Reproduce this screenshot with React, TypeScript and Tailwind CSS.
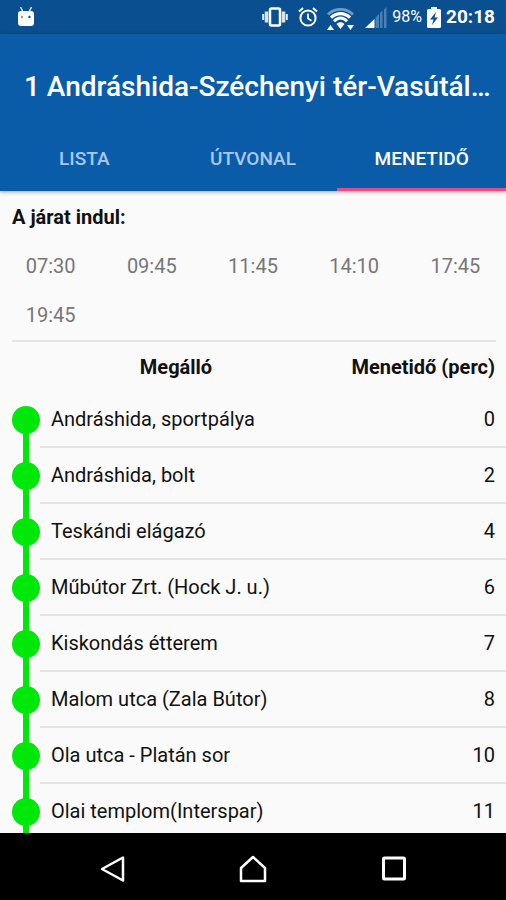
const departures = ["07:30", "09:45", "11:45", "14:10", "17:45", "19:45"];

const stops = [
  { name: "Andráshida, sportpálya", minutes: 0 },
  { name: "Andráshida, bolt", minutes: 2 },
  { name: "Teskándi elágazó", minutes: 4 },
  { name: "Műbútor Zrt. (Hock J. u.)", minutes: 6 },
  { name: "Kiskondás étterem", minutes: 7 },
  { name: "Malom utca (Zala Bútor)", minutes: 8 },
  { name: "Ola utca - Platán sor", minutes: 10 },
  { name: "Olai templom(Interspar)", minutes: 11 },
];

const tabs = [
  { label: "LISTA", active: false },
  { label: "ÚTVONAL", active: false },
  { label: "MENETIDŐ", active: true },
];

function StatusBar() {
  return (
    <div className="flex h-[34px] shrink-0 items-center bg-[#0a4f8f] pr-[11px] pl-[17px] text-white">
      <svg width="18" height="20" viewBox="0 0 18 20" fill="#fff" aria-hidden="true">
        <path d="M3.500 0l2.500 5M14.500 0l-2.500 5" stroke="#dbe7f3" strokeWidth="1.500" />
        <rect x="1" y="4" width="16" height="15" rx="3" />
        <circle cx="5" cy="10" r="1.200" fill="#8a9bb0" />
        <circle cx="12.500" cy="10" r="1.200" fill="#0a4f8f" />
      </svg>
      <div className="ml-auto flex items-center">
        <svg width="26" height="20" viewBox="0 0 26 20" fill="none" aria-hidden="true">
          <path d="M1.200 7v6M24.800 7v6" stroke="#e3edf8" strokeWidth="2" />
          <path d="M4.500 4.500v11M21.500 4.500v11" stroke="#d5e3f2" strokeWidth="3.500" />
          <rect x="8" y="1.500" width="10" height="17" rx="1.500" stroke="#fff" strokeWidth="2.500" />
        </svg>
        <svg className="ml-[10px]" width="20" height="20" viewBox="0 0 20 20" fill="none" stroke="#fff" aria-hidden="true">
          <circle cx="10" cy="11" r="7.600" strokeWidth="2" />
          <path d="M1 4.500L5 1M19 4.500L15 1" strokeWidth="2" />
          <path d="M10 6.500V11.500l3.500 2.200" strokeWidth="1.700" />
        </svg>
        <svg className="mt-1 ml-[9px]" width="27" height="23" viewBox="0 0 27 23" fill="none" aria-hidden="true">
          <path d="M1 6.500C8-.3 19-.3 26 6.500" stroke="#6f9ac6" strokeWidth="2.800" />
          <path d="M4 9.700C9.500 4.300 17.500 4.300 23 9.700" stroke="#fff" strokeWidth="3.200" />
          <path d="M7 13.200C11 9 16 9 20 13.200" stroke="#fff" strokeWidth="3" />
          <path d="M9.500 16C12 13.500 15 13.500 17.500 16L13.500 21z" fill="#fff" />
          <path d="M0 22l3.500-5L7 22zM20 17h7l-3.500 5z" fill="#fff" />
        </svg>
        <svg className="ml-[11px]" width="22" height="21" viewBox="0 0 22 21" aria-hidden="true">
          <path d="M0 21L9.500 12v9z" fill="#fff" />
          <path d="M10.500 10.500l3.500-3.500v14h-3.500zM15 6l2.500-2.500V21H15zM19 2.500L21.500 0v21H19z" fill="#4b80b5" />
        </svg>
        <span className="ml-[5px] text-[16px] leading-5">98%</span>
        <svg className="ml-[5px]" width="14" height="21" viewBox="0 0 14 21" aria-hidden="true">
          <path d="M4 0h6v2h2.500Q14 2 14 3.500v16Q14 21 12.500 21h-11Q0 21 0 19.500v-16Q0 2 1.500 2H4z" fill="#fff" />
          <path d="M9 5L3 12.500h3.500L5 18l6-7.500H7.500z" fill="#0a4f8f" />
        </svg>
        <span className="ml-[5px] text-[19px] leading-5 font-bold">20:18</span>
      </div>
    </div>
  );
}

function Header() {
  return (
    <header className="relative z-10 shrink-0 bg-[#0b5ca8] text-white shadow-[0_1px_4px_rgba(0,0,0,0.35)]">
      <h1 className="pt-[37px] pl-6 text-[28px] leading-8 font-medium whitespace-nowrap">
        1 Andráshida-Széchenyi tér-Vasútál…
      </h1>
      <div role="tablist" className="mt-[21px] grid grid-cols-3">
        {tabs.map((tab) => (
          <button
            key={tab.label}
            type="button"
            role="tab"
            aria-selected={tab.active}
            className={
              tab.active
                ? "h-[67px] border-b-[3px] border-[#ec4a86] pt-[6px] text-[19px] font-medium"
                : "h-[67px] border-b-[3px] border-transparent pt-[6px] text-[19px] font-medium text-[#a9c8e8]"
            }
          >
            {tab.label}
          </button>
        ))}
      </div>
    </header>
  );
}

function StopTable() {
  return (
    <div className="pl-3">
      <table className="w-full border-separate border-spacing-0 text-[20px] leading-6">
        <thead>
          <tr className="h-[50px]">
            <th colSpan={2} className="text-center font-bold">
              Megálló
            </th>
            <th className="w-[166px] pr-[11px] text-right font-bold whitespace-nowrap">
              Menetidő (perc)
            </th>
          </tr>
        </thead>
        <tbody>
          {stops.map((stop, i) => (
            <tr key={stop.name} className="h-[56px]">
              <td className="relative w-7 p-0">
                <span
                  className={
                    i === 0
                      ? "absolute top-1/2 bottom-0 left-[11px] w-[6px] bg-[#00e80a]"
                      : "absolute inset-y-0 left-[11px] w-[6px] bg-[#00e80a]"
                  }
                />
                <span className="relative block size-7 rounded-full bg-[#00e80a]" />
              </td>
              <td className="border-b-2 border-[#e4e4e4] pl-[11px]">{stop.name}</td>
              <td className="border-b-2 border-[#e4e4e4] pr-[11px] text-right">{stop.minutes}</td>
            </tr>
          ))}
        </tbody>
      </table>
    </div>
  );
}

function NavigationBar() {
  return (
    <nav className="flex h-[67px] shrink-0 items-center justify-center gap-[113px] bg-black pt-1">
      <button type="button" aria-label="Back">
        <svg width="28" height="28" viewBox="0 0 28 28" fill="none" stroke="#fff" strokeWidth="2.500">
          <path d="M4 14L25 2.500v23z" strokeLinejoin="round" />
        </svg>
      </button>
      <button type="button" aria-label="Home">
        <svg width="28" height="28" viewBox="0 0 28 28" fill="none" stroke="#fff" strokeWidth="2.500">
          <path d="M2 13L14 2l12 11v13H2z" strokeLinejoin="round" />
        </svg>
      </button>
      <button type="button" aria-label="Recent apps">
        <svg width="28" height="28" viewBox="0 0 28 28" fill="none" stroke="#fff" strokeWidth="3">
          <rect x="3.500" y="3" width="21" height="21" rx="1" />
        </svg>
      </button>
    </nav>
  );
}

export default function App() {
  return (
    <div className="flex h-screen flex-col bg-[#fafafa] font-[Roboto,sans-serif] text-[#111]">
      <StatusBar />
      <Header />
      <main className="min-h-0 flex-1 overflow-hidden">
        <h2 className="px-3 pt-[14px] text-[20px] leading-6 font-bold">A járat indul:</h2>
        <ul className="grid grid-cols-5 pt-[13px] text-center text-[20px] text-[#777]">
          {departures.map((time) => (
            <li key={time} className="leading-[49px]">
              {time}
            </li>
          ))}
        </ul>
        <hr className="mr-[10px] ml-3 border-t-2 border-[#e4e4e4]" />
        <StopTable />
      </main>
      <NavigationBar />
    </div>
  );
}
